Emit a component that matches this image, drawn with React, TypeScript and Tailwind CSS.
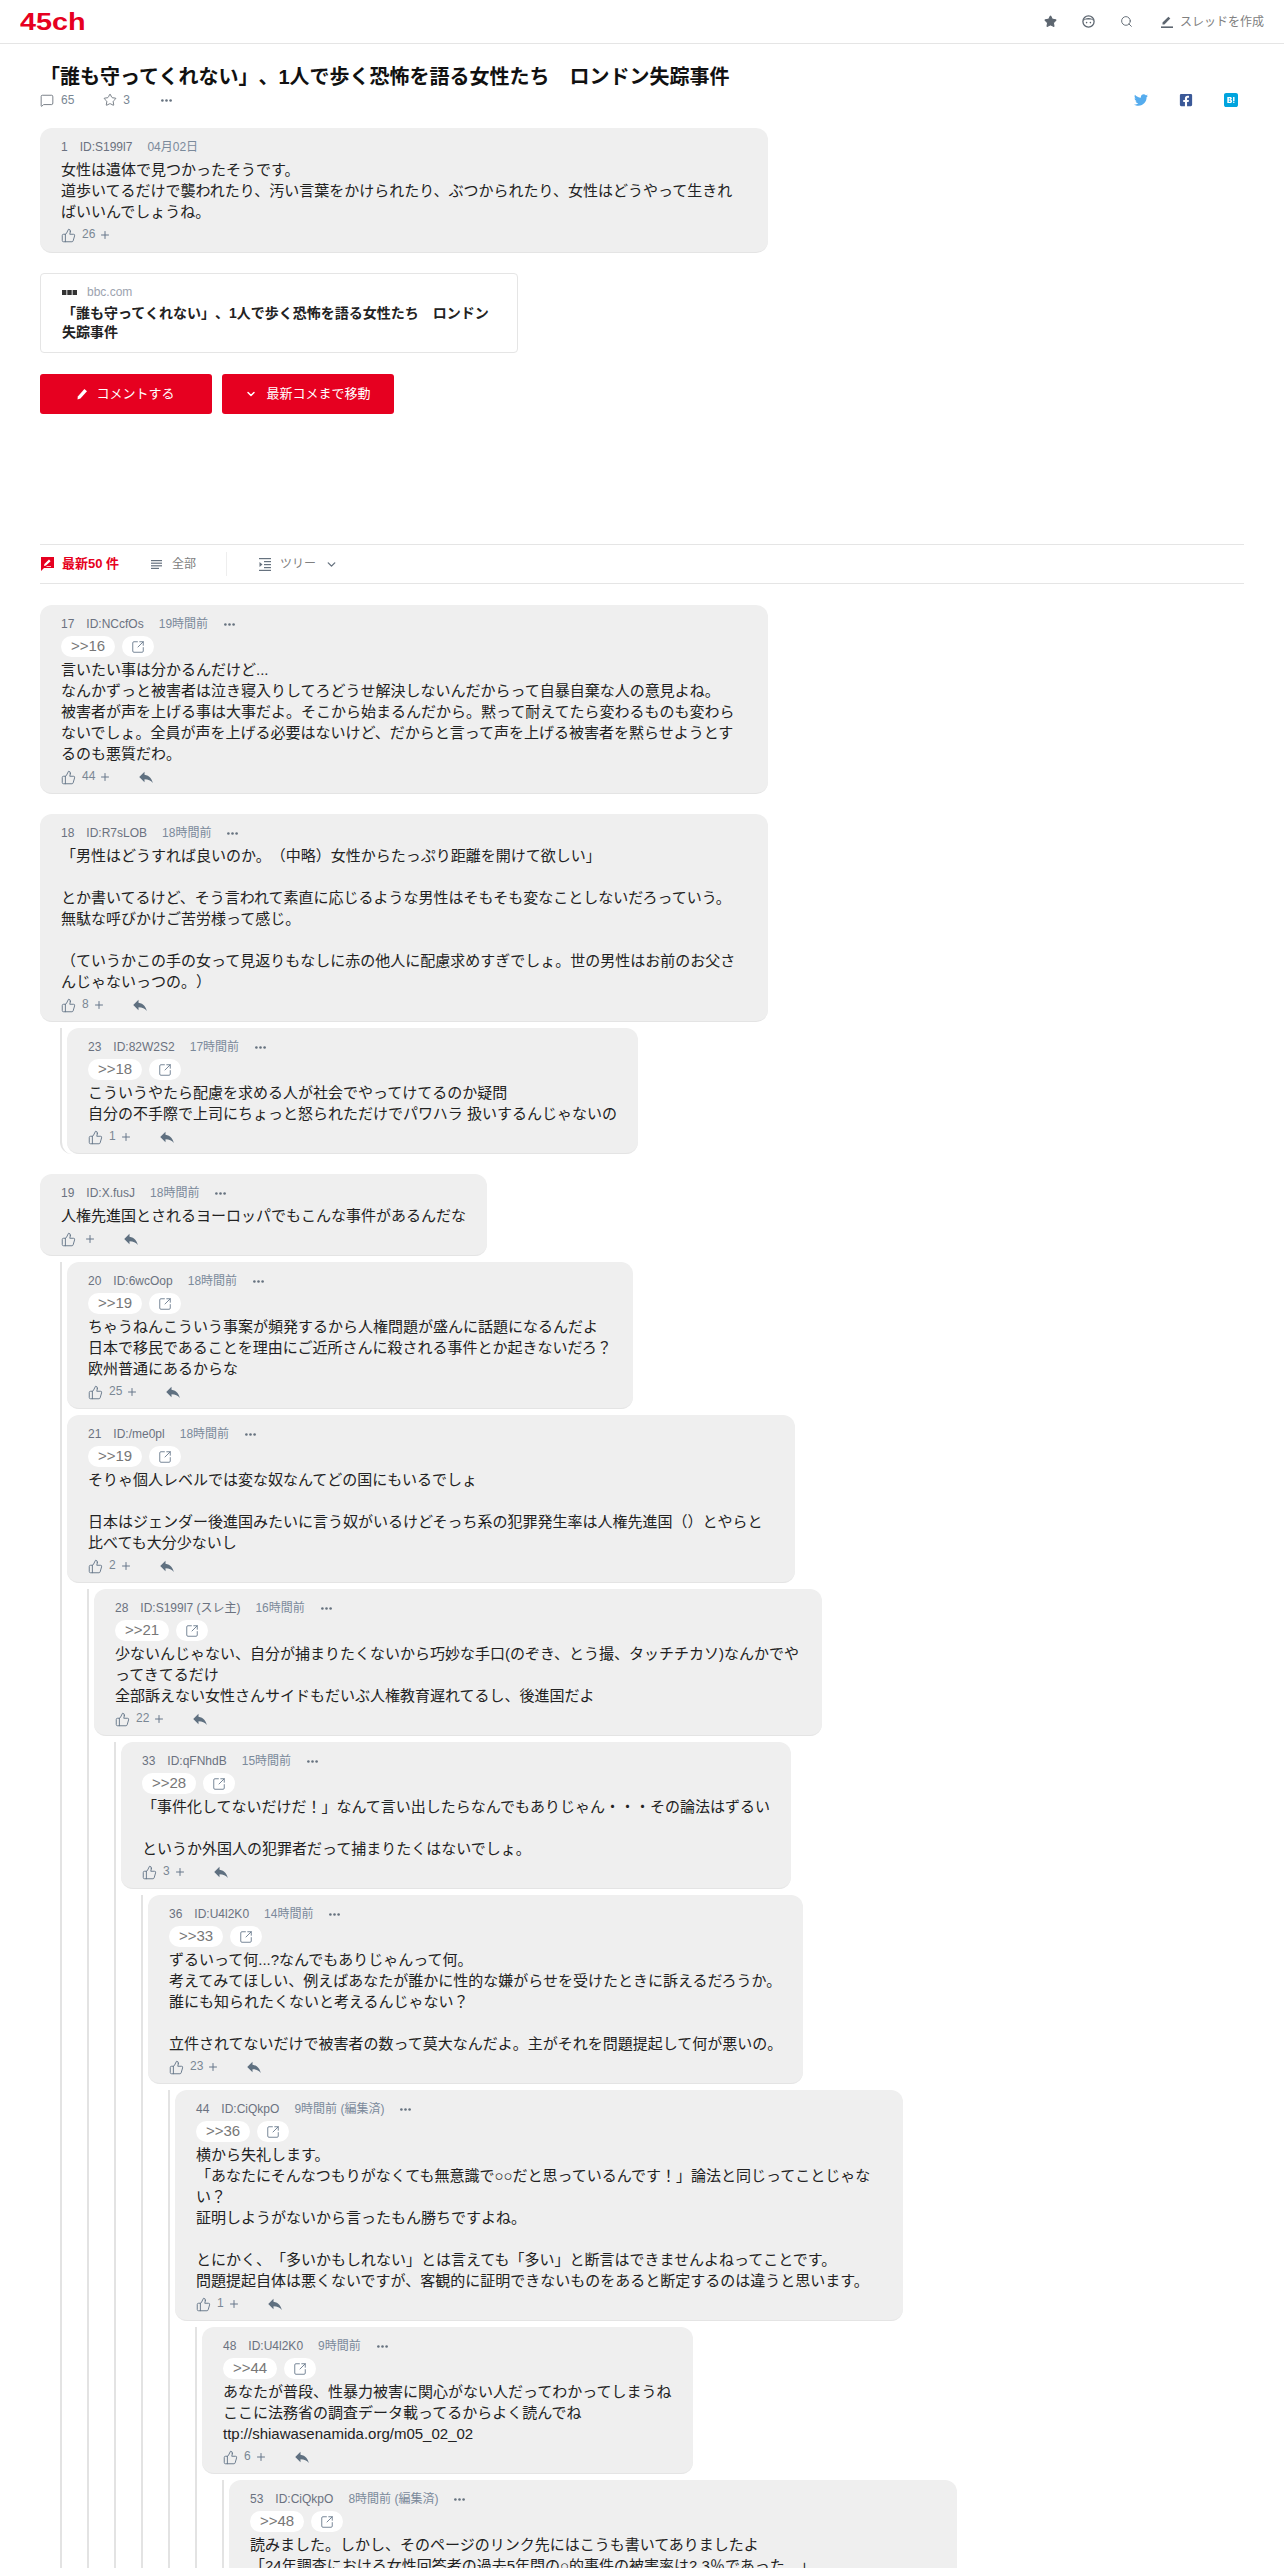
import React from 'react';
import { ChevronDown, MessageSquare, Search, Star, SquareArrowOutUpRight, ThumbsUp, Plus } from 'lucide-react';
import { FaTwitter, FaFacebookSquare } from 'react-icons/fa';
import { SiHatenabookmark } from 'react-icons/si';
import { MdReply } from 'react-icons/md';

interface Res {
  no: number;
  id: string;
  time: string;
  ref?: string;
  body: string;
  likes?: number;
  wide?: boolean;
  replies?: Res[];
}

const Dots = () => (
  <svg width="11" height="3" viewBox="0 0 11 3" className="fill-[#66727f]">
    <circle cx="1.4" cy="1.5" r="1.3" />
    <circle cx="5.5" cy="1.5" r="1.3" />
    <circle cx="9.6" cy="1.5" r="1.3" />
  </svg>
);

const threads: Res[] = [
  {
    no: 17,
    id: 'ID:NCcfOs',
    time: '19時間前',
    ref: '>>16',
    body: '言いたい事は分かるんだけど...\nなんかずっと被害者は泣き寝入りしてろどうせ解決しないんだからって自暴自棄な人の意見よね。\n被害者が声を上げる事は大事だよ。そこから始まるんだから。黙って耐えてたら変わるものも変わらないでしょ。全員が声を上げる必要はないけど、だからと言って声を上げる被害者を黙らせようとするのも悪質だわ。',
    likes: 44,
  },
  {
    no: 18,
    id: 'ID:R7sLOB',
    time: '18時間前',
    body: '「男性はどうすれば良いのか。（中略）女性からたっぷり距離を開けて欲しい」\n\nとか書いてるけど、そう言われて素直に応じるような男性はそもそも変なことしないだろっていう。\n無駄な呼びかけご苦労様って感じ。\n\n（ていうかこの手の女って見返りもなしに赤の他人に配慮求めすぎでしょ。世の男性はお前のお父さんじゃないっつの。）',
    likes: 8,
    replies: [
      {
        no: 23,
        id: 'ID:82W2S2',
        time: '17時間前',
        ref: '>>18',
        body: 'こういうやたら配慮を求める人が社会でやってけてるのか疑問\n自分の不手際で上司にちょっと怒られただけでパワハラ 扱いするんじゃないの',
        likes: 1,
      },
    ],
  },
  {
    no: 19,
    id: 'ID:X.fusJ',
    time: '18時間前',
    body: '人権先進国とされるヨーロッパでもこんな事件があるんだな',
    replies: [
      {
        no: 20,
        id: 'ID:6wcOop',
        time: '18時間前',
        ref: '>>19',
        body: 'ちゃうねんこういう事案が頻発するから人権問題が盛んに話題になるんだよ\n日本で移民であることを理由にご近所さんに殺される事件とか起きないだろ？\n欧州普通にあるからな',
        likes: 25,
      },
      {
        no: 21,
        id: 'ID:/me0pl',
        time: '18時間前',
        ref: '>>19',
        body: 'そりゃ個人レベルでは変な奴なんてどの国にもいるでしょ\n\n日本はジェンダー後進国みたいに言う奴がいるけどそっち系の犯罪発生率は人権先進国（）とやらと比べても大分少ないし',
        likes: 2,
        replies: [
          {
            no: 28,
            id: 'ID:S199l7 (スレ主)',
            time: '16時間前',
            ref: '>>21',
            body: '少ないんじゃない、自分が捕まりたくないから巧妙な手口(のぞき、とう撮、タッチチカソ)なんかでやってきてるだけ\n全部訴えない女性さんサイドもだいぶ人権教育遅れてるし、後進国だよ',
            likes: 22,
            replies: [
              {
                no: 33,
                id: 'ID:qFNhdB',
                time: '15時間前',
                ref: '>>28',
                body: '「事件化してないだけだ！」なんて言い出したらなんでもありじゃん・・・その論法はずるい\n\nというか外国人の犯罪者だって捕まりたくはないでしょ。',
                likes: 3,
                replies: [
                  {
                    no: 36,
                    id: 'ID:U4l2K0',
                    time: '14時間前',
                    ref: '>>33',
                    body: 'ずるいって何...?なんでもありじゃんって何。\n考えてみてほしい、例えばあなたが誰かに性的な嫌がらせを受けたときに訴えるだろうか。\n誰にも知られたくないと考えるんじゃない？\n\n立件されてないだけで被害者の数って莫大なんだよ。主がそれを問題提起して何が悪いの。',
                    likes: 23,
                    replies: [
                      {
                        no: 44,
                        id: 'ID:CiQkpO',
                        time: '9時間前 (編集済)',
                        ref: '>>36',
                        body: '横から失礼します。\n「あなたにそんなつもりがなくても無意識で○○だと思っているんです！」論法と同じってことじゃない？\n証明しようがないから言ったもん勝ちですよね。\n\nとにかく、「多いかもしれない」とは言えても「多い」と断言はできませんよねってことです。\n問題提起自体は悪くないですが、客観的に証明できないものをあると断定するのは違うと思います。',
                        likes: 1,
                        replies: [
                          {
                            no: 48,
                            id: 'ID:U4l2K0',
                            time: '9時間前',
                            ref: '>>44',
                            body: 'あなたが普段、性暴力被害に関心がない人だってわかってしまうね\nここに法務省の調査データ載ってるからよく読んでね\nttp://shiawasenamida.org/m05_02_02',
                            likes: 6,
                            replies: [
                              {
                                no: 53,
                                id: 'ID:CiQkpO',
                                time: '8時間前 (編集済)',
                                ref: '>>48',
                                wide: true,
                                body: '読みました。しかし、そのページのリンク先にはこうも書いてありましたよ\n「24年調査における女性回答者の過去5年間の○的事件の被害率は2.3％であった。」',
                                likes: 2,
                              },
                            ],
                          },
                        ],
                      },
                    ],
                  },
                ],
              },
            ],
          },
        ],
      },
    ],
  },
];

function Likes({ count }: { count?: number }) {
  return (
    <>
      <ThumbsUp className="w-[15px] h-[15px] text-[#66778a]" strokeWidth={1.5} />
      {count !== undefined && <span className="ml-[6px] text-xs text-[#7a8794] relative -top-px">{count}</span>}
      <Plus className={`${count !== undefined ? 'ml-[4px]' : 'ml-[8px]'} w-[12px] h-[12px] text-[#66778a]`} strokeWidth={2} />
    </>
  );
}

function Comment({ res }: { res: Res }) {
  return (
    <div>
      <div className={`${res.wide ? 'w-[728px]' : 'w-fit max-w-[728px]'} bg-[#efefef] rounded-[12px] border-b border-[#e4e4e4] px-[21px] pt-[9px] pb-[5px]`}>
        <div className="flex items-center h-5 text-xs">
          <span className="text-[#6b7280]">{res.no}</span>
          <span className="ml-[12px] text-[#6b7280]">{res.id}</span>
          <span className="ml-[15px] text-[#7b8a9b]">{res.time}</span>
          <span className="ml-4">
            <Dots />
          </span>
        </div>
        {res.ref && (
          <div className="flex gap-[7px] mt-[2px]">
            <span className="h-[21px] px-[10px] flex items-center bg-white rounded-full text-[15px] text-[#777777]">{res.ref}</span>
            <span className="h-[21px] w-[32px] flex items-center justify-center bg-white rounded-full">
              <SquareArrowOutUpRight className="w-[14px] h-[14px] text-[#66778a]" strokeWidth={1.5} />
            </span>
          </div>
        )}
        <p className="mt-[2px] text-[15px] leading-[21px] text-[#222222] whitespace-pre-wrap break-all [text-spacing-trim:space-all]">{res.body}</p>
        <div className="flex items-center h-[22px] mt-[2px]">
          <Likes count={res.likes} />
          <MdReply className="ml-[26px] w-[18px] h-[18px] text-[#5f7080]" />
        </div>
      </div>
      {res.replies && (
        <div className="mt-[6px] ml-5 pl-[5px] border-l-2 border-[#e3e3e3] rounded-bl-[12px] flex flex-col gap-[6px]">
          {res.replies.map((r) => (
            <Comment key={r.no} res={r} />
          ))}
        </div>
      )}
    </div>
  );
}

export default function App() {
  return (
    <div className="h-[2568px] overflow-hidden bg-white font-['Liberation_Sans','Noto_Sans_CJK_JP',sans-serif] [text-spacing-trim:space-all]">
      <header className="h-[44px] border-b border-[#e5e5e5] flex items-center pl-5 pr-5">
        <span className="text-[24px] leading-none font-bold text-[#e60020] origin-left scale-x-[1.2]">45ch</span>
        <div className="ml-auto flex items-center">
          <Star className="w-[13px] h-[13px] text-[#5d6670] fill-[#5d6670]" />
          <svg width="13" height="13" viewBox="0 0 13 13" className="ml-[25px] text-[#5d6670]">
            <circle cx="6.5" cy="6.5" r="5.6" fill="none" stroke="currentColor" strokeWidth="1.3" />
            <path d="M1 6 C2.5 2 10.5 2 12 6 L9.5 4.6 L3.5 4.6 Z" fill="currentColor" />
            <circle cx="4.6" cy="7.6" r="0.8" fill="currentColor" />
            <circle cx="8.4" cy="7.6" r="0.8" fill="currentColor" />
          </svg>
          <Search className="ml-[25px] w-[13px] h-[13px] text-[#5d6670]" strokeWidth={1.7} />
          <svg width="12" height="13" viewBox="0 0 12 13" className="ml-[28px] text-[#5d6670]">
            <path d="M1.5 9.5 L1.5 7.6 L7.4 1.7 L9.3 3.6 L3.4 9.5 Z" fill="currentColor" />
            <rect x="0" y="11.4" width="12" height="1.6" fill="currentColor" />
          </svg>
          <span className="ml-[7px] text-xs text-[#808080]">スレッドを作成</span>
        </div>
      </header>

      <main className="px-10">
        <h1 className="mt-[23px] text-[20px] leading-[20px] font-bold text-[#111111]">「誰も守ってくれない」、1人で歩く恐怖を語る女性たち　ロンドン失踪事件</h1>
        <div className="mt-[1px] h-[24px] flex items-center text-xs text-[#7a8794]">
          <MessageSquare className="w-[14px] h-[15px] text-[#5d6670]" strokeWidth={1.4} />
          <span className="ml-[7px]">65</span>
          <Star className="ml-[29px] w-[14px] h-[14px] text-[#5d6670]" strokeWidth={1.4} />
          <span className="ml-[6px]">3</span>
          <span className="ml-[31px]">
            <Dots />
          </span>
          <div className="ml-auto mr-[6px] flex items-center gap-[31px]">
            <FaTwitter className="w-[14px] h-[14px] text-[#55acee]" />
            <FaFacebookSquare className="w-[14px] h-[14px] text-[#3b5998]" />
            <SiHatenabookmark className="w-[14px] h-[14px] text-[#00a4de]" />
          </div>
        </div>

        <div className="mt-[16px] w-[728px] bg-[#efefef] rounded-[12px] border-b border-[#e4e4e4] px-[21px] pt-[9px] pb-[6px]">
          <div className="flex items-center h-5 text-xs">
            <span className="text-[#6b7280]">1</span>
            <span className="ml-[12px] text-[#6b7280]">ID:S199l7</span>
            <span className="ml-[15px] text-[#7b8a9b]">04月02日</span>
          </div>
          <p className="mt-[2px] text-[15px] leading-[21px] text-[#222222]">
            女性は遺体で見つかったそうです。
            <br />
            道歩いてるだけで襲われたり、汚い言葉をかけられたり、ぶつかられたり、女性はどうやって生きればいいんでしょうね。
          </p>
          <div className="flex items-center h-[22px] mt-[2px]">
            <Likes count={26} />
          </div>
        </div>

        <div className="mt-[20px] w-[478px] h-[80px] border border-[#e5e5e5] rounded-[4px] px-[21px] pt-[9px]">
          <div className="flex items-center h-[18px] text-xs text-[#9ca3af]">
            <svg width="15" height="5" viewBox="0 0 15 5">
              <rect x="0" y="0" width="4.4" height="5" fill="#333333" />
              <rect x="5.3" y="0" width="4.4" height="5" fill="#333333" />
              <rect x="10.6" y="0" width="4.4" height="5" fill="#333333" />
            </svg>
            <span className="ml-[10px]">bbc.com</span>
          </div>
          <p className="mt-[3px] text-sm leading-[19px] font-bold text-[#222222]">「誰も守ってくれない」、1人で歩く恐怖を語る女性たち　ロンドン失踪事件</p>
        </div>

        <div className="mt-[21px] flex gap-[10px]">
          <button className="w-[172px] h-[40px] bg-[#e60020] rounded-[3px] flex items-center justify-center text-[13px] text-white">
            <svg width="11" height="12" viewBox="0 0 11 12" className="mr-[8px]">
              <path d="M0.5 11.5 L0.8 8.5 L7.4 1 L10 3.2 L3.4 10.6 Z" fill="white" />
            </svg>
            コメントする
          </button>
          <button className="w-[172px] h-[40px] bg-[#e60020] rounded-[3px] flex items-center justify-center text-[13px] text-white">
            <ChevronDown className="w-[12px] h-[12px] mr-[9px]" strokeWidth={3} />
            最新コメまで移動
          </button>
        </div>

        <div className="mt-[130px] h-[40px] border-y border-[#e5e5e5] flex items-center text-xs">
          <svg width="13" height="14" viewBox="0 0 13 14" className="ml-[1px]">
            <path d="M0 0 H13 V11 H3 L0 14 Z" fill="#e60020" />
            <path d="M3 9 L3.4 7 L8 2.6 L9.6 4.2 L5 8.6 Z M5.5 9.2 H10 V10 H5.5 Z" fill="white" />
          </svg>
          <span className="ml-[8px] text-[13px] font-bold text-[#e60020]">最新50 件</span>
          <svg width="11" height="9" viewBox="0 0 11 9" className="ml-[32px] fill-[#66727f]">
            <rect y="0" width="11" height="1.2" />
            <rect y="2.6" width="11" height="1.2" />
            <rect y="5.2" width="11" height="1.2" />
            <rect y="7.8" width="8" height="1.2" />
          </svg>
          <span className="ml-[10px] text-[#808080]">全部</span>
          <span className="ml-[30px] w-px h-[24px] bg-[#eeeeee]" />
          <svg width="12" height="13" viewBox="0 0 12 13" className="ml-[32px] fill-[#66727f]">
            <rect y="0" width="12" height="1.2" />
            <rect x="5" y="3" width="7" height="1.2" />
            <rect x="5" y="6" width="7" height="1.2" />
            <rect x="5" y="9" width="7" height="1.2" />
            <rect y="11.8" width="12" height="1.2" />
            <path d="M0.5 4 L3.5 6.5 L0.5 9 Z" />
          </svg>
          <span className="ml-[9px] text-[#808080]">ツリー</span>
          <ChevronDown className="ml-[9px] w-[13px] h-[13px] text-[#66727f]" strokeWidth={2.5} />
        </div>

        <div className="mt-[21px] flex flex-col gap-[20px]">
          {threads.map((t) => (
            <Comment key={t.no} res={t} />
          ))}
        </div>
      </main>
    </div>
  );
}
